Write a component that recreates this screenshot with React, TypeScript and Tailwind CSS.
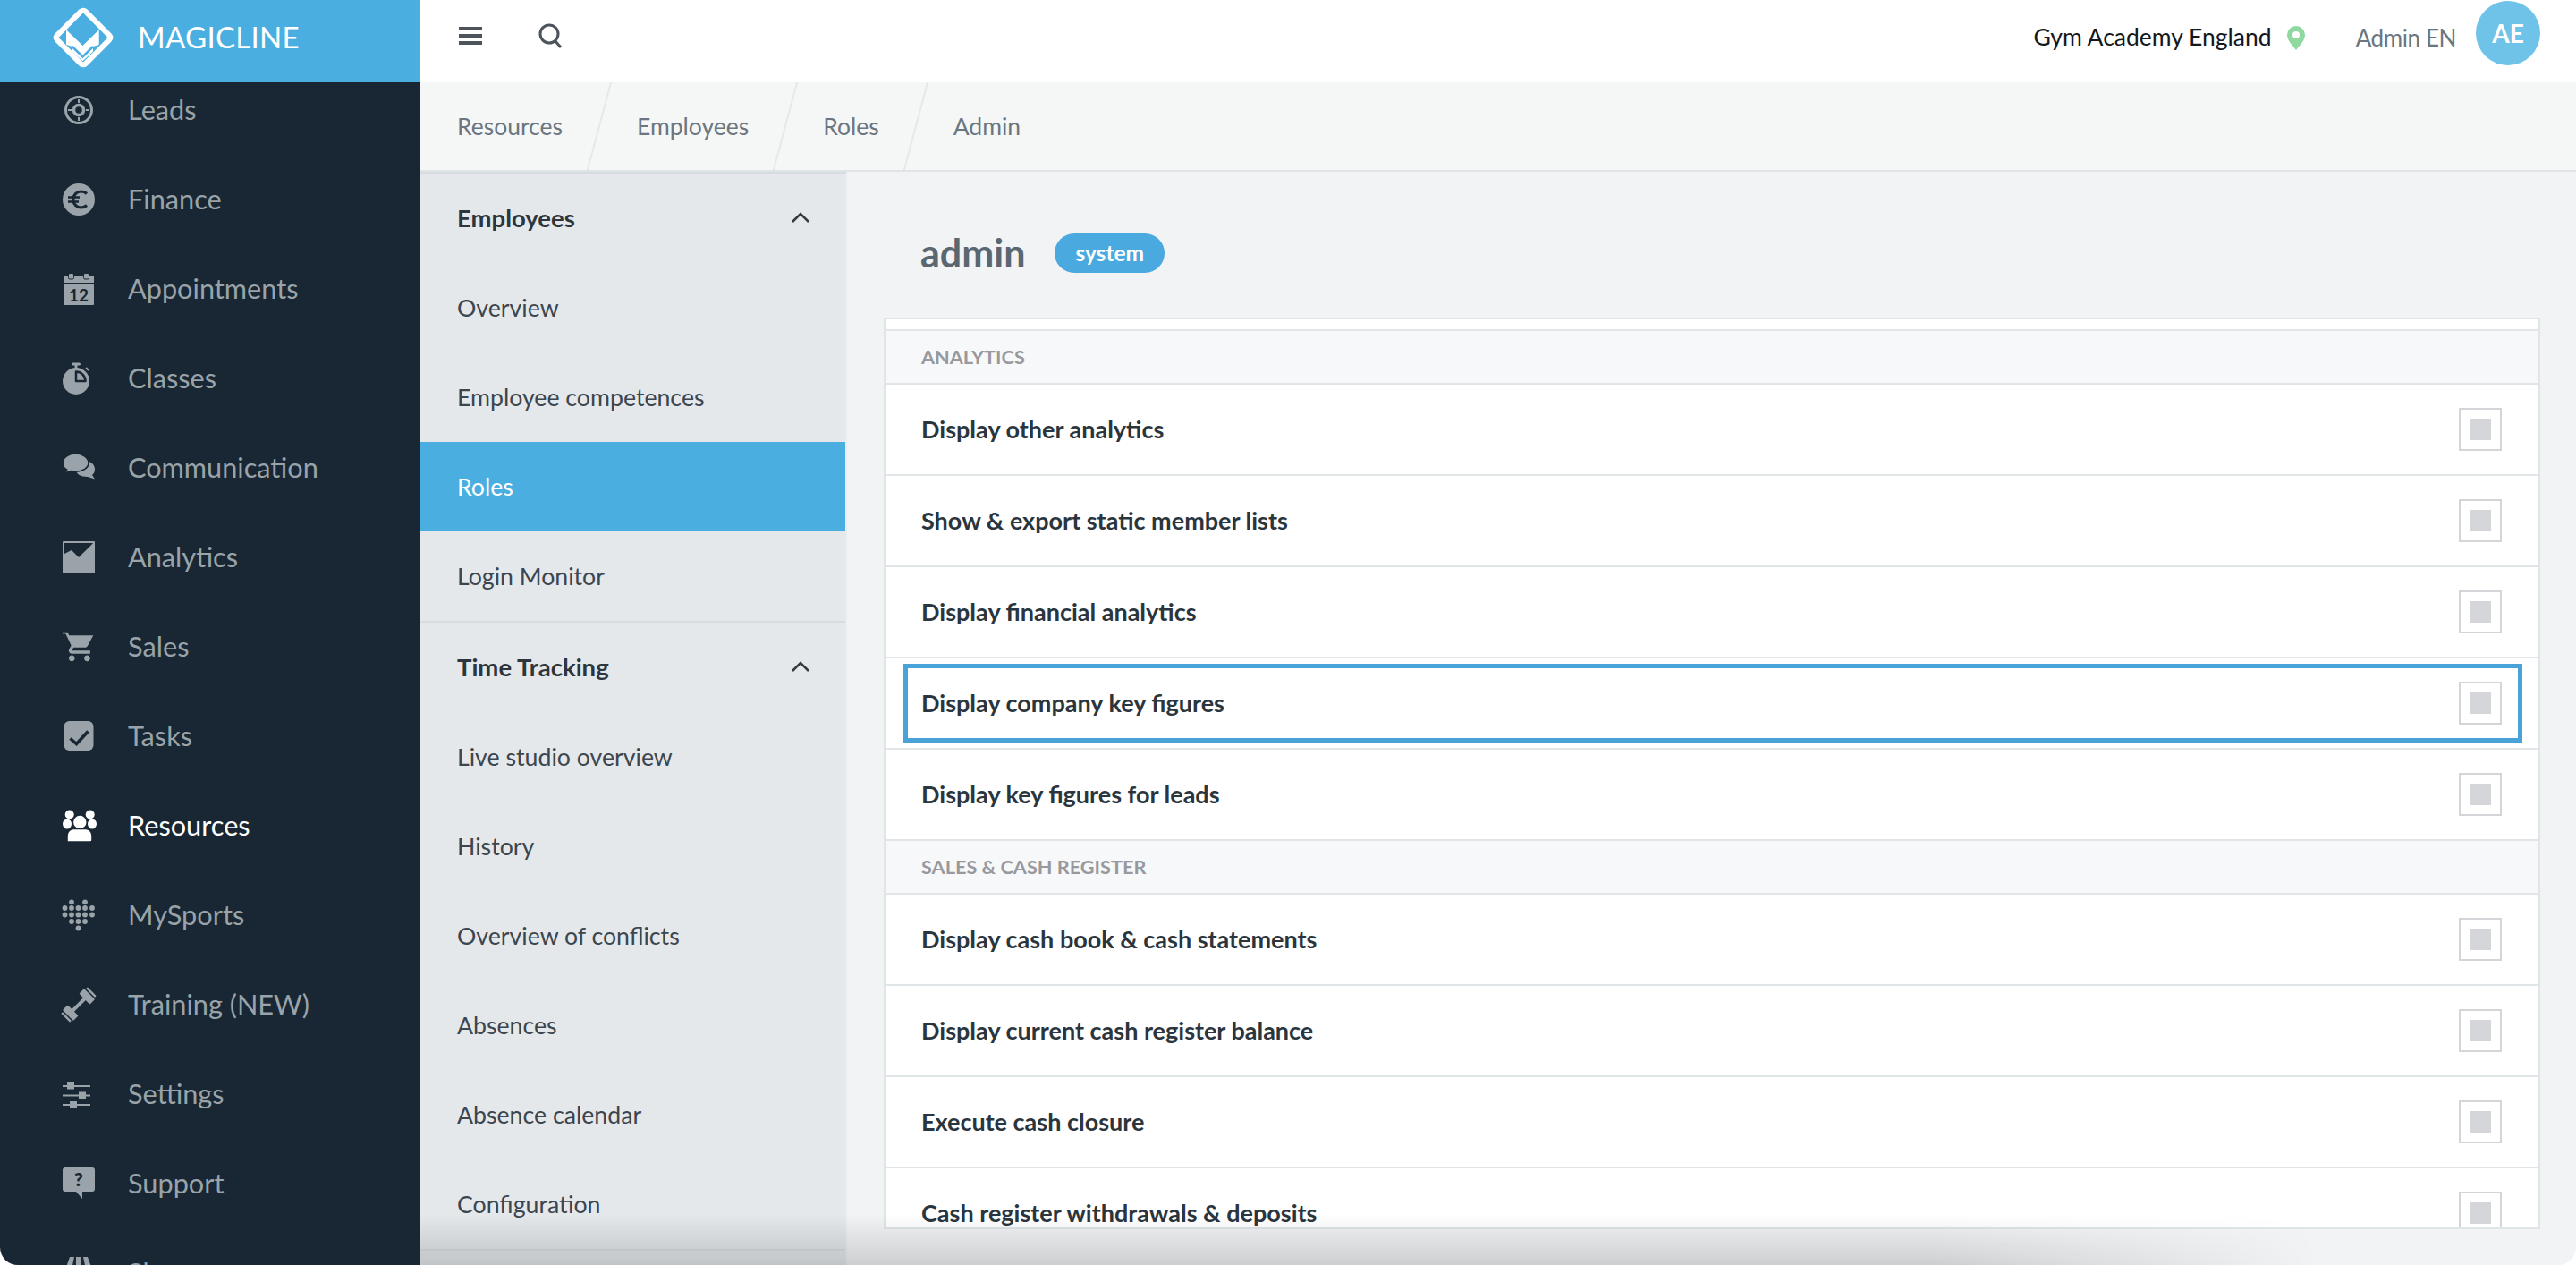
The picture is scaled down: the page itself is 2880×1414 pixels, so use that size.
import type { ReactNode } from 'react';

const DARK = '#182733';

function Icon({ children }: { children: ReactNode }) {
  return (
    <svg viewBox="0 0 36 36" className="w-9 h-9 shrink-0 overflow-visible" fill="currentColor">
      {children}
    </svg>
  );
}

const navItems: { label: string; active?: boolean; icon: ReactNode }[] = [
  {
    label: 'Leads',
    icon: (
      <>
        <circle cx="18" cy="18" r="14.5" fill="none" stroke="currentColor" strokeWidth="3" />
        <circle cx="18" cy="18" r="5.5" fill="none" stroke="currentColor" strokeWidth="3.5" />
        <path d="M18 6v4M18 26v4M6 18h4M26 18h4" stroke="currentColor" strokeWidth="2" />
      </>
    ),
  },
  {
    label: 'Finance',
    icon: (
      <>
        <circle cx="18" cy="18" r="18" />
        <path d="M27 11.5a9 9 0 1 0 0 13" fill="none" stroke={DARK} strokeWidth="3.2" />
        <path d="M6 15.5h13M6 20.5h12" stroke={DARK} strokeWidth="2.4" />
      </>
    ),
  },
  {
    label: 'Appointments',
    icon: (
      <>
        <path d="M1 4h34v31a1 1 0 0 1-1 1H2a1 1 0 0 1-1-1z" />
        <rect x="6.5" y="0.5" width="6" height="6.5" rx="1.5" stroke={DARK} strokeWidth="1" />
        <rect x="23.5" y="0.5" width="6" height="6.5" rx="1.5" stroke={DARK} strokeWidth="1" />
        <rect x="1" y="11" width="34" height="2" fill={DARK} />
        <text x="18" y="32" textAnchor="middle" fontSize="19" fontWeight="700" fill={DARK} fontFamily="Lato, sans-serif">12</text>
      </>
    ),
  },
  {
    label: 'Classes',
    icon: (
      <>
        <rect x="10" y="0.5" width="10" height="3" rx="1.5" />
        <rect x="13.5" y="3" width="3" height="5" />
        <path d="M26 6l3 3" stroke="currentColor" strokeWidth="2" />
        <circle cx="15" cy="21" r="15" />
        <path d="M15 10.5a10.5 10.5 0 0 1 10.5 10.5H15z" stroke={DARK} strokeWidth="2.5" strokeLinejoin="round" />
      </>
    ),
  },
  {
    label: 'Communication',
    icon: (
      <>
        <path d="M24 10c7 0 12 4 12 9.5 0 3-1 5-3 6.5l3 4.5-8-2.5c-8 0-13-3-13-8s3-10 9-10z" />
        <path d="M14.500 2C6.500 2 0 6.500 0 12.500c0 3.500 2 6 4.500 7.500L1.500 24l8-2.500c1.500.5 3.500.5 5 .5 8 0 14.500-4 14.500-9.500S22.500 2 14.500 2z" stroke={DARK} strokeWidth="1.6" />
      </>
    ),
  },
  {
    label: 'Analytics',
    icon: (
      <>
        <rect x="0" y="0" width="36" height="36" rx="1" />
        <path d="M2 2h32l-2.300 2.500L18 18l-8-8-8 4z" fill={DARK} />
      </>
    ),
  },
  {
    label: 'Sales',
    icon: (
      <svg x="0" y="0" width="36" height="36" viewBox="1 2 21 21">
        <path d="M7 18c-1.100 0-1.990.900-1.990 2S5.900 22 7 22s2-.900 2-2-.900-2-2-2zM1 2v2h2l3.600 7.590-1.350 2.450c-.160.280-.250.610-.250.960 0 1.100.900 2 2 2h12v-2H7.420c-.140 0-.250-.110-.250-.250l.030-.120.900-1.630h7.450c.750 0 1.410-.410 1.750-1.030l3.700-6.970H5.210l-.940-2H1zm16 16c-1.100 0-1.990.900-1.990 2s.890 2 1.990 2 2-.900 2-2-.900-2-2-2z" />
      </svg>
    ),
  },
  {
    label: 'Tasks',
    icon: (
      <>
        <rect x="1.500" y="1" width="33" height="33" rx="6" />
        <path d="M8.500 20.500l7 6L28.500 12.500" fill="none" stroke={DARK} strokeWidth="3.600" />
      </>
    ),
  },
  {
    label: 'Resources',
    active: true,
    icon: (
      <>
        <ellipse cx="5" cy="16" rx="5" ry="5.500" />
        <ellipse cx="33" cy="16" rx="5" ry="5.500" />
        <circle cx="7.700" cy="5.500" r="5" />
        <circle cx="30.700" cy="5.500" r="5" />
        <circle cx="19.300" cy="14" r="8" stroke={DARK} strokeWidth="1.600" />
        <path d="M5 36v-7c0-5 4-7.500 7-7.500h14c3 0 7 2.500 7 7.500v5a2 2 0 0 1-2 2z" stroke={DARK} strokeWidth="1.600" />
      </>
    ),
  },
  {
    label: 'MySports',
    icon: (
      <>
        {[[10, 3.300], [25, 3.300], [2.500, 10], [10, 10], [17.500, 10], [25, 10], [33, 10], [2.500, 17.500], [10, 17.500], [17.500, 17.500], [25, 17.500], [33, 17.500], [10, 25], [17.500, 25], [25, 25], [17.500, 32.500]].map(([cx, cy]) => (
          <circle key={`${cx}-${cy}`} cx={cx} cy={cy} r="2.900" />
        ))}
      </>
    ),
  },
  {
    label: 'Training (NEW)',
    icon: (
      <g transform="rotate(-45 18 18)">
        <rect x="4" y="16" width="28" height="4" />
        <rect x="1" y="9.500" width="8" height="17" rx="1" />
        <rect x="27" y="9.500" width="8" height="17" rx="1" />
        <rect x="-3" y="11" width="2.500" height="14" rx="1" />
        <rect x="36.500" y="11" width="2.500" height="14" rx="1" />
      </g>
    ),
  },
  {
    label: 'Settings',
    icon: (
      <>
        <path d="M0 9h31M0 19.500h31M0 30h31" stroke="currentColor" strokeWidth="2" />
        <rect x="5" y="5" width="8" height="7.500" />
        <rect x="18" y="15.500" width="8" height="7.500" />
        <rect x="8" y="26" width="8" height="7.500" />
      </>
    ),
  },
  {
    label: 'Support',
    icon: (
      <>
        <path d="M3 0h30a3 3 0 0 1 3 3v21a3 3 0 0 1-3 3H22v8l-7-8H3a3 3 0 0 1-3-3V3a3 3 0 0 1 3-3z" />
        <text x="18" y="21" textAnchor="middle" fontSize="21" fontWeight="900" fill={DARK} fontFamily="Lato, sans-serif">?</text>
      </>
    ),
  },
  {
    label: 'Shop',
    icon: <path d="M8 0h5l-3 14H3zM15 0h5l1 14h-6zM23 0h5l5 14h-7z" />,
  },
];

const crumbs = ['Resources', 'Employees', 'Roles', 'Admin'];

const subnav: { title: string; items: string[] }[] = [
  { title: 'Employees', items: ['Overview', 'Employee competences', 'Roles', 'Login Monitor'] },
  {
    title: 'Time Tracking',
    items: ['Live studio overview', 'History', 'Overview of conflicts', 'Absences', 'Absence calendar', 'Configuration'],
  },
];

const sections: { title: string; rows: string[] }[] = [
  {
    title: 'Analytics',
    rows: ['Display other analytics', 'Show & export static member lists', 'Display financial analytics', 'Display company key figures', 'Display key figures for leads'],
  },
  {
    title: 'Sales & cash register',
    rows: ['Display cash book & cash statements', 'Display current cash register balance', 'Execute cash closure', 'Cash register withdrawals & deposits'],
  },
];

function Logo() {
  return (
    <svg viewBox="0 0 70 70" className="w-[70px] h-[70px] shrink-0 -mt-2">
      <rect x="12.500" y="12.500" width="45" height="45" rx="3.500" transform="rotate(45 35 35)" fill="none" stroke="#fff" strokeWidth="6" />
      <path d="M16 26.300L34.500 44l18.200-17.700V43L46 45v5.500L34.500 61.300 22.700 50.500V45L16 43z" fill="#fff" />
      <path d="M22.700 45l11.800 11.500L46 45" fill="none" stroke="#4aaee0" strokeWidth="2.500" />
    </svg>
  );
}

function Sidebar() {
  return (
    <aside className="w-[470px] shrink-0 flex flex-col bg-[#182733]">
      <div className="h-[92px] shrink-0 bg-[#4aaee0] flex items-center pl-[58px] relative z-10">
        <Logo />
        <span className="ml-[26px] -mt-2 text-[33px] tracking-[0.3px] text-white">MAGICLINE</span>
      </div>
      <nav className="flex-1 overflow-hidden">
        <div className="-mt-[19px]">
          {navItems.map((item) => (
            <div
              key={item.label}
              className={`h-[100px] flex items-center pl-[70px] gap-[37px] text-[30.7px] ${item.active ? 'text-white' : 'text-[#99a3a9]'}`}
            >
              <Icon>{item.icon}</Icon>
              <span>{item.label}</span>
            </div>
          ))}
        </div>
      </nav>
    </aside>
  );
}

function TopBar() {
  return (
    <header className="h-[92px] shrink-0 bg-white flex items-center pl-[43px] pr-[40px]">
      <div className="w-[26px] flex flex-col gap-[4px] -mt-3">
        <span className="h-[4px] bg-[#4d535b]" />
        <span className="h-[4px] bg-[#4d535b]" />
        <span className="h-[4px] bg-[#4d535b]" />
      </div>
      <svg viewBox="0 0 28 28" className="w-7 h-7 ml-[63px] -mt-3" fill="none" stroke="#4d535b" strokeWidth="3">
        <circle cx="12" cy="12" r="10" />
        <path d="M18 19l7 8" />
      </svg>
      <div className="ml-auto flex items-center -mt-[8px] text-[26.5px] text-[#14181c]">
        Gym Academy England
        <svg viewBox="0 0 20 27" className="w-5 h-[27px] ml-[17px]">
          <path d="M10 0a10 10 0 0 1 10 10c0 6-6 12-10 17C6 22 0 16 0 10A10 10 0 0 1 10 0z" fill="#8fd9a0" />
          <circle cx="10" cy="10" r="4" fill="#fff" />
        </svg>
      </div>
      <span className="ml-[57px] -mt-[8px] text-[26px] tracking-[-0.4px] text-[#6b7680]">Admin EN</span>
      <div className="ml-[22px] w-[72px] h-[72px] self-start mt-[1px] rounded-full bg-[#6fc3e8] flex items-center justify-center text-[28px] font-bold text-white">
        AE
      </div>
    </header>
  );
}

function Breadcrumbs() {
  return (
    <div className="h-[100px] shrink-0 bg-[#f5f7f7] border-b-2 border-[#dfe5e6] flex text-[26.5px] text-[#6b7680]">
      {crumbs.map((crumb, i) => (
        <div key={crumb} className="relative flex items-center pl-[41px] pr-[42px] pt-[2px]">
          {crumb}
          {i < crumbs.length - 1 && <span className="absolute right-0 top-0 bottom-0 w-[2px] bg-[#e4e8ea] -skew-x-[15deg]" />}
        </div>
      ))}
    </div>
  );
}

function SubNav() {
  return (
    <div className="w-[477px] shrink-0 bg-[#e4e8eb] border-r-2 border-r-[#e9edef] border-t-2 border-t-[#d5dcdf] overflow-hidden text-[26.7px] text-[#3c464e]">
      {subnav.map((group) => (
        <div key={group.title} className="border-b-2 border-[#d8dde0]">
          <div className="h-[100px] flex items-center justify-between pl-[41px] pr-[40px] text-[27.5px] font-bold text-[#2d363d]">
            {group.title}
            <svg viewBox="0 0 20 12" className="w-5 h-3 -mt-[2px]" fill="none" stroke="#333b42" strokeWidth="2.500">
              <path d="M1 11l9-9 9 9" />
            </svg>
          </div>
          {group.items.map((item) => (
            <div
              key={item}
              className={`h-[100px] flex items-center pl-[41px] ${item === 'Roles' ? 'bg-[#4aaee0] text-white' : ''}`}
            >
              {item}
            </div>
          ))}
        </div>
      ))}
    </div>
  );
}

function PermissionRow({ label }: { label: string }) {
  return (
    <div className="relative h-[102px] shrink-0 border-b-2 border-[#e0e6e8] flex items-center justify-between pl-10 pr-[41px]">
      <span className="text-[27px] font-bold text-[#2b353d]">{label}</span>
      <span className="w-12 h-12 border-2 border-[#d3d5d9] bg-white flex items-center justify-center">
        <span className="w-6 h-6 bg-[#d4d6da]" />
      </span>
      {label === 'Display company key figures' && (
        <span className="absolute left-[20px] right-[18px] top-[6px] bottom-[6px] border-[5px] border-[#4aa3d8]" />
      )}
    </div>
  );
}

function Content() {
  return (
    <main className="flex-1 min-w-0 flex flex-col bg-[#f1f3f5] pl-[41px] pr-[40px] pb-[40px]">
      <div className="mt-[69px] mb-[50px] pl-[41px] h-11 flex items-center gap-[33px]">
        <h1 className="text-[43px] font-bold text-[#5a6670]">admin</h1>
        <span className="h-11 px-[23px] rounded-full bg-[#4aa9de] flex items-center text-[24.5px] font-bold text-white">system</span>
      </div>
      <div className="flex-1 min-h-0 overflow-hidden border-2 border-[#e0e6e8] bg-white flex flex-col">
        <div className="h-[13px] shrink-0 border-b-2 border-[#e0e6e8]" />
        {sections.map((section) => (
          <div key={section.title} className="flex flex-col">
            <div className="h-[60px] shrink-0 bg-[#f7f8fa] border-b-2 border-[#e0e6e8] flex items-center pl-10 text-[21.7px] font-bold uppercase text-[#97999d]">
              {section.title}
            </div>
            {section.rows.map((row) => (
              <PermissionRow key={row} label={row} />
            ))}
          </div>
        ))}
      </div>
    </main>
  );
}

export default function App() {
  return (
    <div className="relative h-screen w-full overflow-hidden rounded-b-[20px] flex bg-white [font-family:Lato,sans-serif]">
      <Sidebar />
      <div className="flex-1 min-w-0 flex flex-col">
        <TopBar />
        <Breadcrumbs />
        <div className="flex-1 min-h-0 flex">
          <SubNav />
          <Content />
        </div>
      </div>
      <div className="pointer-events-none absolute bottom-0 left-[470px] right-0 h-[56px] bg-linear-to-t from-black/15 to-transparent [mask-image:linear-gradient(to_right,black_70%,transparent_88%)]" />
    </div>
  );
}
